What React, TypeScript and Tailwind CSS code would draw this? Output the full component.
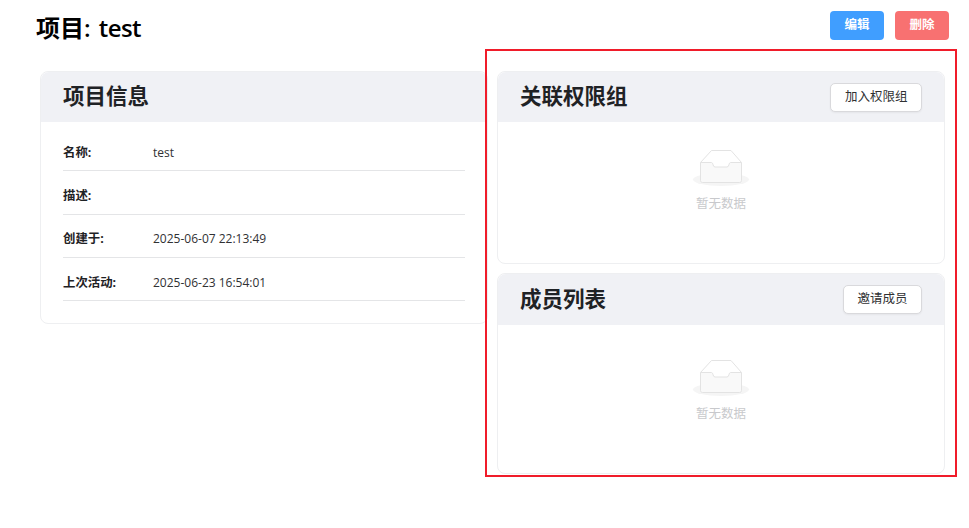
const font = "font-['Open_Sans','Noto_Sans_CJK_SC',sans-serif]";

const infoRows = [
  { label: "名称:", value: "test", cls: "h-[43px] pb-[7px]" },
  { label: "描述:", value: "", cls: "h-[44px] pb-[8px]" },
  { label: "创建于:", value: "2025-06-07 22:13:49", cls: "h-[43px] pb-[8px]" },
  { label: "上次活动:", value: "2025-06-23 16:54:01", cls: "h-[43px] pb-[7px]" },
];

function EmptyBox() {
  return (
    <svg width="58" height="37" viewBox="0 0 58 37" fill="none">
      <ellipse cx="29" cy="29.5" rx="28" ry="6.5" fill="#f5f5f5" />
      <path d="M8.5 12.5 L19.5 0.5 H39 L49.5 12.5" stroke="#e3e3e3" strokeWidth="1" fill="#fff" />
      <path
        d="M8.5 12.5 H19.5 C21.5 12.5 20.5 17 23 17 H35 C37.5 17 36.5 12.5 38.5 12.5 H49.5 V30.5 C49.5 31.7 48.7 32.5 47.5 32.5 H10.5 C9.3 32.5 8.5 31.7 8.5 30.5 Z"
        stroke="#e3e3e3"
        strokeWidth="1"
        fill="#f9f9f9"
      />
    </svg>
  );
}

function Empty({ cls }: { cls: string }) {
  return (
    <div className={`flex flex-col items-center ${cls}`}>
      <EmptyBox />
      <div className="mt-[7px] text-[12.5px] leading-[20px] text-[#c8c9cc]">暂无数据</div>
    </div>
  );
}

function CardHead({ title, action, cls }: { title: string; action?: string; cls: string }) {
  return (
    <div className={`flex items-center justify-between rounded-t-[8px] bg-[#f0f1f5] pr-[22px] pl-[22px] ${cls}`}>
      <h2 className="-mt-[2px] text-[21.5px] leading-[28px] font-bold text-[#1f2225]">{title}</h2>
      {action && (
        <button className="h-[29px] rounded-[5px] border border-[#d9d9dc] bg-white px-[13.5px] text-[12.5px] text-[#303133] shadow-[0_1px_2px_rgba(0,0,0,0.05)]">
          {action}
        </button>
      )}
    </div>
  );
}

export default function App() {
  return (
    <div className={`relative h-[528px] w-[969px] overflow-hidden bg-white ${font}`}>
      <header className="flex h-[40px] items-start justify-between pt-[11px] pr-[20px] pl-[36px]">
        <h1 className="text-[24px] leading-[34px] font-bold text-black">
          项目<span className="font-semibold">: <span className="ml-[2px] tracking-[-0.6px]">test</span></span>
        </h1>
        <div className="flex gap-[11px]">
          <button className="h-[29px] w-[54px] rounded-[4px] bg-[#409eff] text-[12.5px] font-bold text-white">编辑</button>
          <button className="h-[29px] w-[54px] rounded-[4px] bg-[#f87171] text-[12.5px] font-bold text-white">删除</button>
        </div>
      </header>

      <main className="mt-[31px] flex gap-[9px] pl-[40px]">
        <section className="h-[253px] w-[448px] rounded-[8px] border border-[#eeeff1]">
          <CardHead title="项目信息" cls="h-[50px]" />
          <div className="px-[22px] pt-[6px]">
            {infoRows.map((row) => (
              <div key={row.label} className={`flex items-end border-b border-[#e4e5e7] text-[12px] leading-[20px] ${row.cls}`}>
                <span className="w-[90px] text-[12.4px] font-bold text-[#1f2225]">{row.label}</span>
                <span className="text-[#303133]">{row.value}</span>
              </div>
            ))}
          </div>
        </section>

        <div className="flex w-[448px] flex-col gap-[9px]">
          <section className="h-[193px] rounded-[8px] border border-[#eeeff1]">
            <CardHead title="关联权限组" action="加入权限组" cls="h-[50px]" />
            <Empty cls="pt-[28px]" />
          </section>
          <section className="h-[201px] rounded-[8px] border border-[#eeeff1]">
            <CardHead title="成员列表" action="邀请成员" cls="h-[51px]" />
            <Empty cls="pt-[35px]" />
          </section>
        </div>
      </main>

      {/* red annotation frame from the screenshot */}
      <div className="absolute top-[49px] left-[485px] h-[428px] w-[472px] border-2 border-[#f01c2a]" />
    </div>
  );
}
